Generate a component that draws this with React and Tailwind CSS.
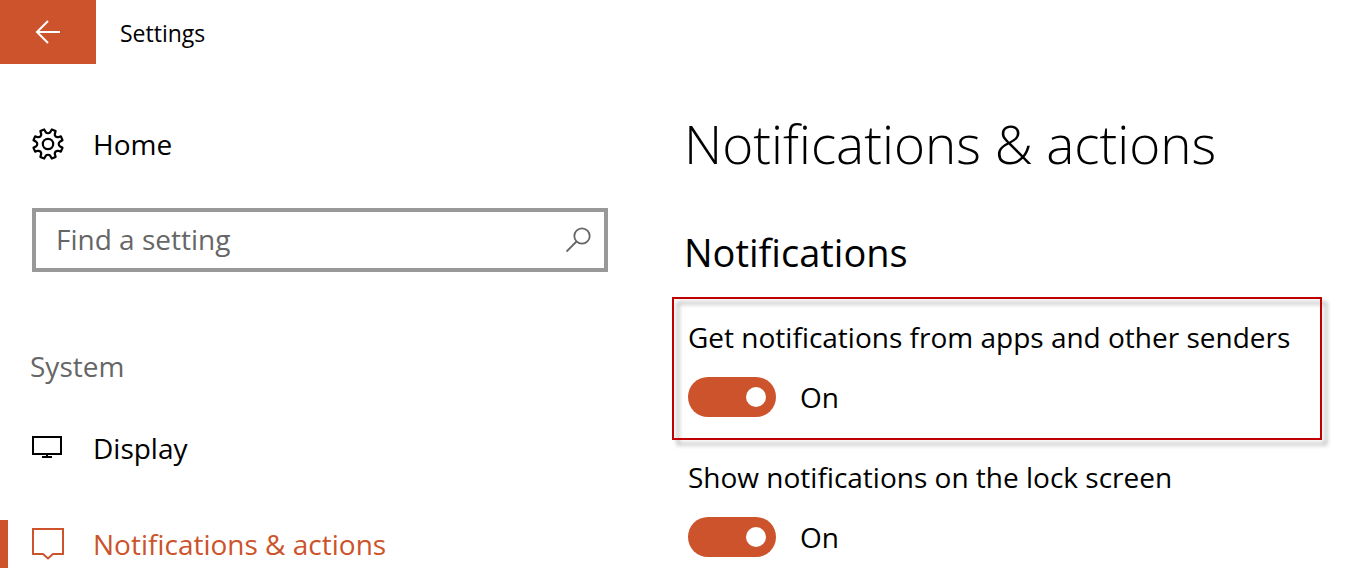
import { useState } from 'react';

const navItems = [
  { id: 'display', label: 'Display', Icon: DisplayIcon },
  { id: 'notifications', label: 'Notifications & actions', Icon: MessageIcon },
];

function BackIcon() {
  return (
    <svg width="26" height="24" viewBox="0 0 26 24" fill="none" stroke="currentColor" strokeWidth="2" aria-hidden="true">
      <path d="M25 12H2M13 1L2 12l11 11" />
    </svg>
  );
}

function GearIcon() {
  return (
    <svg width="32" height="32" viewBox="0 0 32 32" fill="none" stroke="currentColor" strokeWidth="2.2" strokeLinejoin="round" aria-hidden="true">
      <circle cx="16" cy="16" r="5.2" />
      <path d="M13.8 4.2L12.2 1.5 8.4 3.1 9.2 6.1A2.8 2.8 0 0 1 6.1 9.2L3.1 8.4 1.5 12.2 4.2 13.8A2.8 2.8 0 0 1 4.2 18.2L1.5 19.8 3.1 23.6 6.1 22.8A2.8 2.8 0 0 1 9.2 25.9L8.4 28.9 12.2 30.5 13.8 27.8A2.8 2.8 0 0 1 18.2 27.8L19.8 30.5 23.6 28.9 22.8 25.9A2.8 2.8 0 0 1 25.9 22.8L28.9 23.6 30.5 19.8 27.8 18.2A2.8 2.8 0 0 1 27.8 13.8L30.5 12.2 28.9 8.4 25.9 9.2A2.8 2.8 0 0 1 22.8 6.1L23.6 3.1 19.8 1.5 18.2 4.2A2.8 2.8 0 0 1 13.8 4.2Z" />
    </svg>
  );
}

function SearchIcon() {
  return (
    <svg width="26" height="26" viewBox="0 0 26 26" fill="none" stroke="currentColor" strokeWidth="1.8" aria-hidden="true">
      <circle cx="16" cy="9" r="7.7" />
      <path d="M10.500 14.500L.5 24.500" />
    </svg>
  );
}

function DisplayIcon() {
  return (
    <svg width="32" height="32" viewBox="0 0 32 32" fill="none" stroke="currentColor" strokeWidth="2" aria-hidden="true">
      <path d="M1 5h28v17H1zM15 22v3M10 25h10" />
    </svg>
  );
}

function MessageIcon() {
  return (
    <svg width="32" height="32" viewBox="0 0 32 32" fill="none" stroke="currentColor" strokeWidth="2" aria-hidden="true">
      <path d="M1 1h30v25H21l-5 4.500-5-4.500H1z" />
    </svg>
  );
}

function ToggleSetting({ id, label, checked, onChange }) {
  return (
    <div className="px-4">
      <label htmlFor={id} className="block text-[28px] leading-10">{label}</label>
      <div className="mt-5 flex items-center gap-6">
        <input
          id={id}
          type="checkbox"
          role="switch"
          checked={checked}
          onChange={(e) => onChange(e.target.checked)}
          className="flex h-10 w-[88px] shrink-0 cursor-pointer appearance-none items-center rounded-full bg-[#999999] px-[10px] before:size-5 before:rounded-full before:bg-white checked:justify-end checked:bg-[#cc532b]"
        />
        <span className="text-[28px] leading-10">{checked ? 'On' : 'Off'}</span>
      </div>
    </div>
  );
}

export default function App() {
  const [query, setQuery] = useState('');
  const [active, setActive] = useState('notifications');
  const [fromApps, setFromApps] = useState(true);
  const [lockScreen, setLockScreen] = useState(true);

  return (
    <div className="bg-white font-['Open_Sans',sans-serif] text-black">
      <header className="flex items-center gap-6">
        <button aria-label="Back" className="flex h-16 w-24 items-center justify-center bg-[#cc532b] text-white">
          <BackIcon />
        </button>
        <span className="pt-[2px] text-[23px] leading-8">Settings</span>
      </header>

      <div className="flex">
        <aside className="w-[640px] shrink-0 pt-14">
          <a href="#home" className="flex h-12 items-center gap-[29px] px-8 text-[28px] leading-10">
            <GearIcon />
            Home
          </a>

          <div className="mx-8 mt-10 flex h-16 items-center border-4 border-[#999999] pr-3 pl-5 text-[#666666]">
            <input
              type="text"
              aria-label="Find a setting"
              placeholder="Find a setting"
              value={query}
              onChange={(e) => setQuery(e.target.value)}
              className="min-w-0 flex-1 pb-[3px] text-[28px] leading-10 outline-none placeholder:text-[#666666]"
            />
            <button aria-label="Search">
              <SearchIcon />
            </button>
          </div>

          <h2 className="mt-[74px] px-[30px] text-[28px] leading-10 text-[#666666]">System</h2>

          <nav className="mt-[38px] flex flex-col gap-12">
            {navItems.map(({ id, label, Icon }) => (
              <a
                key={id}
                href={`#${id}`}
                onClick={() => setActive(id)}
                className={`flex h-12 items-center gap-[29px] border-l-8 pr-8 pl-6 text-[28px] leading-10 ${
                  active === id ? 'border-[#cc532b] text-[#cc532b]' : 'border-transparent'
                }`}
              >
                <Icon />
                {label}
              </a>
            ))}
          </nav>
        </aside>

        <main className="min-w-0 flex-1 pt-10 pr-[42px] pl-8">
          <h1 className="pl-3 text-[53px] leading-20 font-light">Notifications &amp; actions</h1>
          <h2 className="mt-10 pl-3 text-[38px] leading-14">Notifications</h2>

          <div className="relative mt-[17px] pt-5 pb-[23px]">
            <ToggleSetting
              id="from-apps"
              label="Get notifications from apps and other senders"
              checked={fromApps}
              onChange={setFromApps}
            />
            {/* callout frame, its shadow falls on both sides of the line */}
            <div className="pointer-events-none absolute inset-0 border-2 border-[#c00000] drop-shadow-[5px_5px_2px_rgba(0,0,0,0.35)]" />
          </div>

          <div className="mt-[17px]">
            <ToggleSetting
              id="lock-screen"
              label="Show notifications on the lock screen"
              checked={lockScreen}
              onChange={setLockScreen}
            />
          </div>
        </main>
      </div>
    </div>
  );
}
